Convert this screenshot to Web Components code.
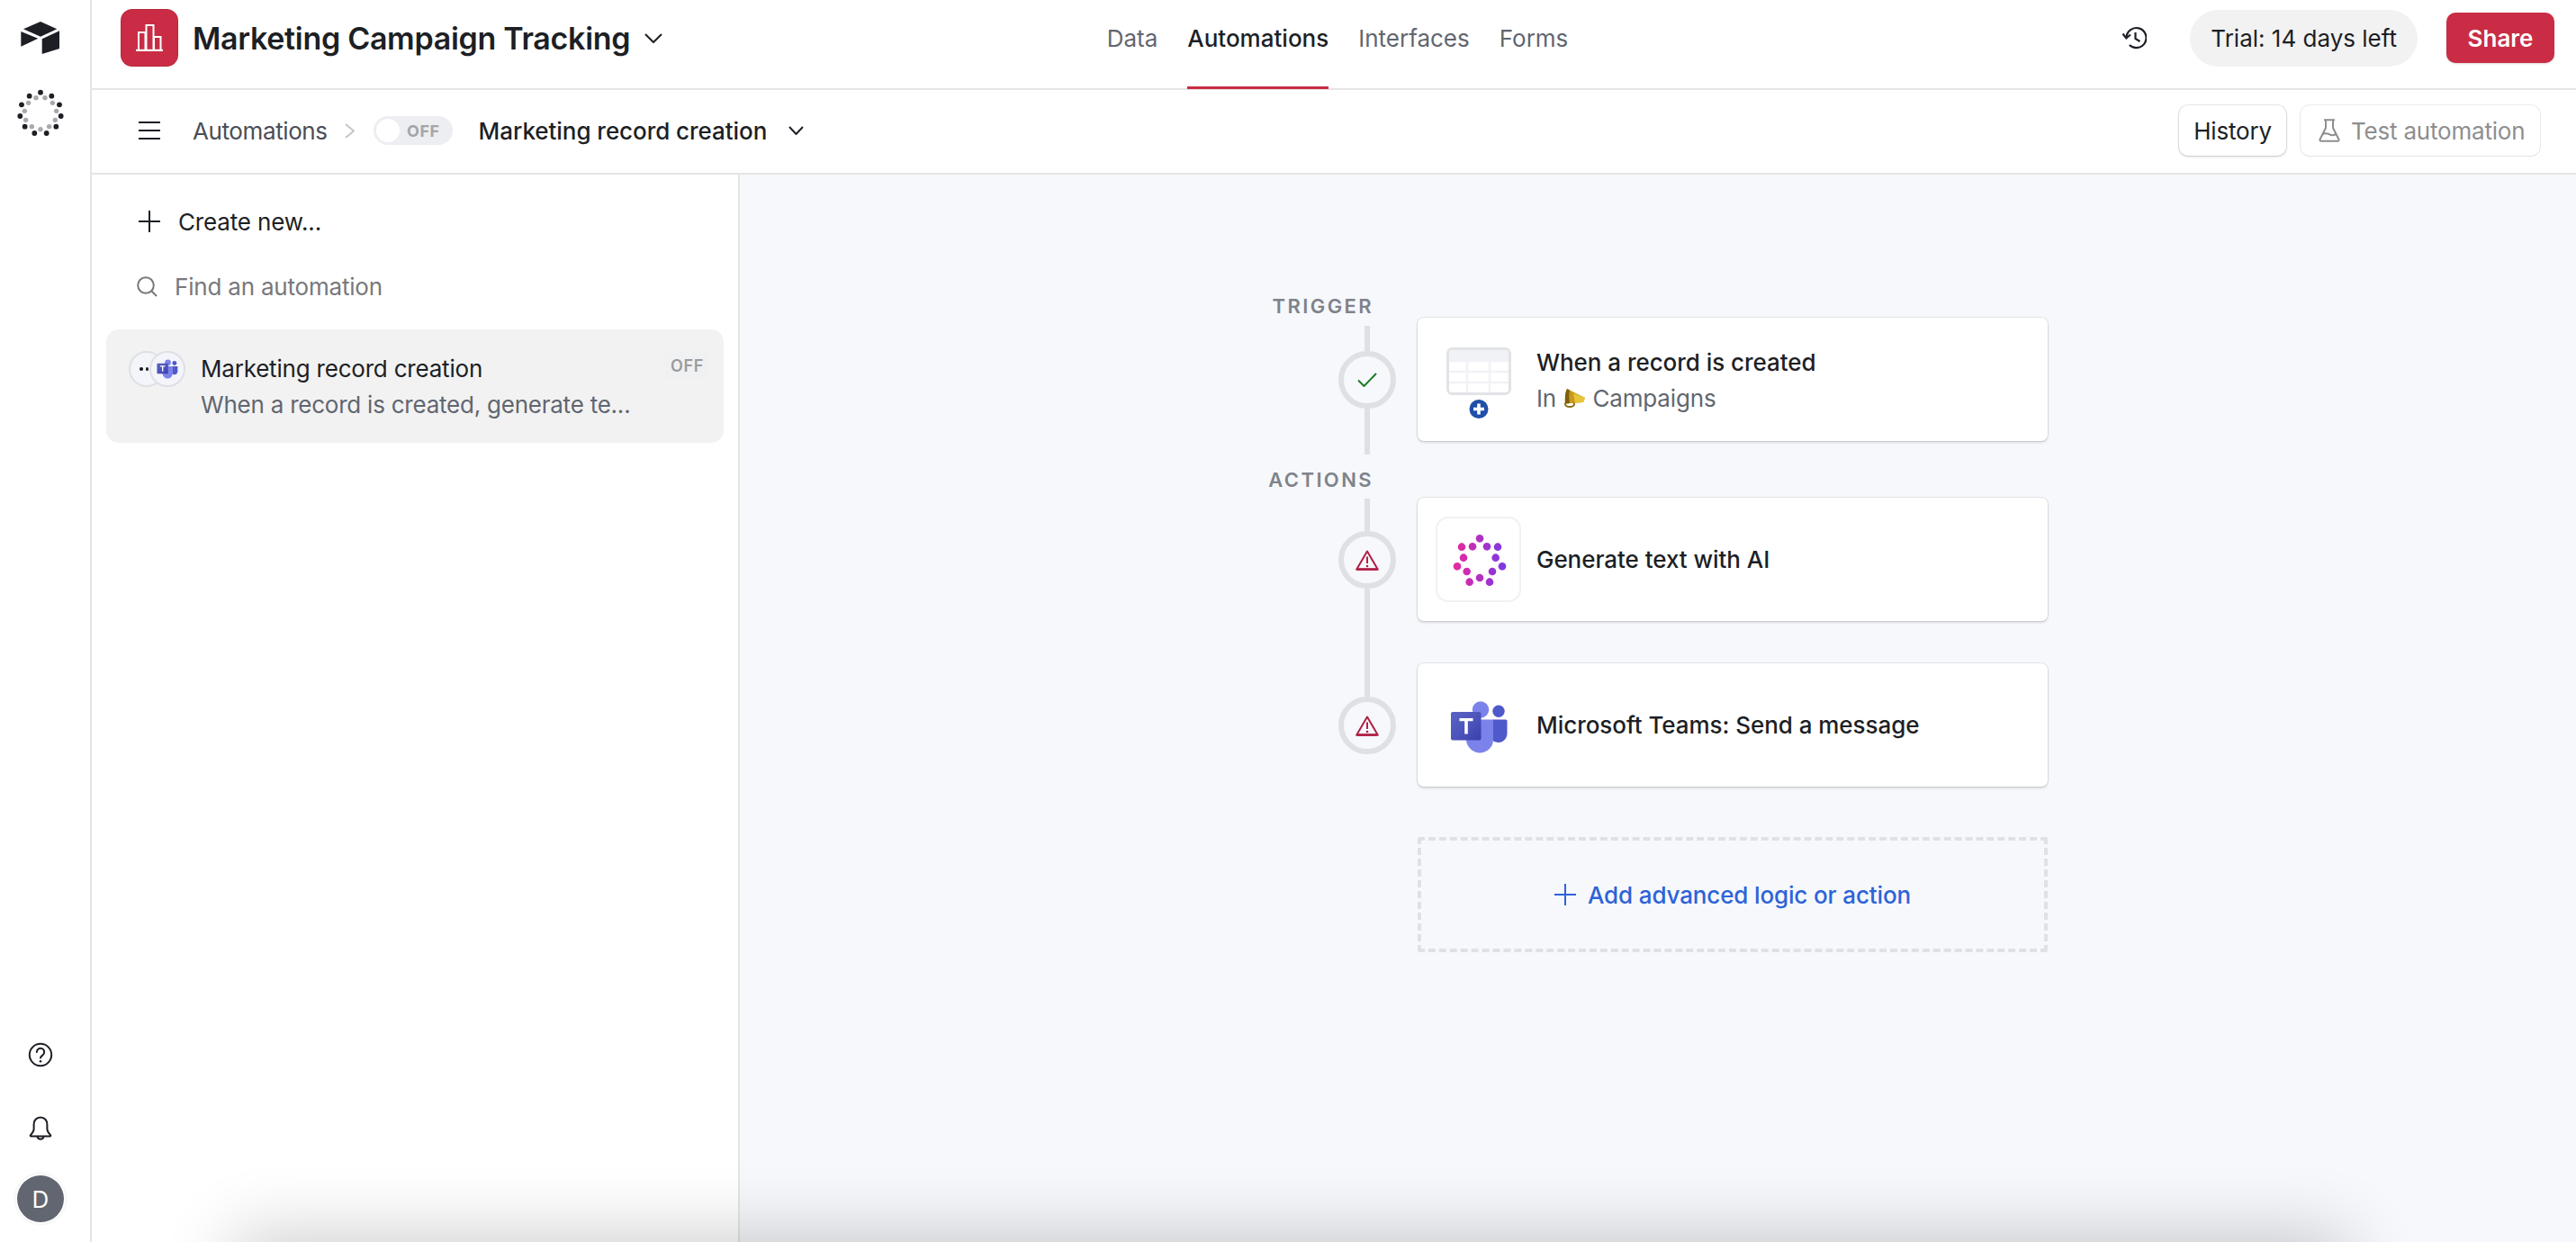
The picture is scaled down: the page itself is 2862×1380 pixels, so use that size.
<!DOCTYPE html>
<html lang="en"><head><meta charset="utf-8"><title>Marketing Campaign Tracking</title>
<style>
html,body{margin:0;padding:0;height:100%;background:#fff;overflow:hidden}
body{font-family:Inter,"Liberation Sans",sans-serif;color:#1d1f25}
</style></head><body>
<app-shell>
  <app-rail slot="rail"></app-rail>
  <app-topbar slot="top"></app-topbar>
  <app-subbar slot="sub"></app-subbar>
  <app-sidebar slot="side">
    <auto-item name="Marketing record creation" desc="When a record is created, generate te..."></auto-item>
  </app-sidebar>
  <flow-canvas slot="canvas">
    <flow-label>TRIGGER</flow-label>
    <flow-step status="ok" pad="9" above="28" below="51" two>
      <table-icon slot="icon"></table-icon>
      <span slot="title">When a record is created</span>
      <span slot="sub">In <mega-phone></mega-phone> Campaigns</span>
    </flow-step>
    <flow-label style="height:48px;align-items:flex-end;padding-bottom:9px">ACTIONS</flow-label>
    <flow-step status="warn" pad="1" above="36" below="83">
      <ai-badge slot="icon" style="margin-left:-2px"></ai-badge>
      <span slot="title">Generate text with AI</span>
    </flow-step>
    <flow-step status="warn" pad="0" above="37" below="0">
      <teams-icon slot="icon" style="width:65px;height:60px;margin-top:4px"></teams-icon>
      <span slot="title">Microsoft Teams: Send a message</span>
    </flow-step>
    <flow-add>Add advanced logic or action</flow-add>
  </flow-canvas>
</app-shell>

<script>
function def(name, css, html, setup){
  customElements.define(name, class extends HTMLElement{
    connectedCallback(){
      if(this.shadowRoot) return;
      const r=this.attachShadow({mode:'open'});
      r.innerHTML='<style>'+css+'</style>'+(typeof html==='function'?html(this):html);
      if(setup) setup(r,this);
    }
  });
}
const F='font-family:Inter,"Liberation Sans",sans-serif;';

def('app-shell',`
:host{display:grid;position:relative;width:2862px;height:1380px;overflow:hidden;background:#fff;
 grid-template-columns:102px 720px 1fr;grid-template-rows:100px 94px 1fr;${F}}
::slotted([slot=rail]){grid-row:1/4;grid-column:1}
::slotted([slot=top]){grid-row:1;grid-column:2/4}
::slotted([slot=sub]){grid-row:2;grid-column:2/4}
::slotted([slot=side]){grid-row:3;grid-column:2}
::slotted([slot=canvas]){grid-row:3;grid-column:3}
.shade{position:absolute;left:268px;right:262px;top:100%;height:120px;box-shadow:0 0 80px 8px rgba(0,0,0,.2);pointer-events:none}
`,`<slot name="rail"></slot><slot name="top"></slot><slot name="sub"></slot><slot name="side"></slot><slot name="canvas"></slot><div class="shade"></div>`);

const outer=[[135,308],[98,320],[172,320],[72,349],[198,349],[67,387],[203,387],[83,422],[187,422],[115,444],[155,444]];
const inner=[[120,326],[150,326],[95,343],[175,343],[82,370],[188,370],[86,400],[184,400],[106,422],[164,422],[135,431]];
const ring=outer.map(p=>`<circle cx="${p[0]/3}" cy="${p[1]/3}" r="2.9" fill="#1d1f25"/>`).join('')+inner.map(p=>`<circle cx="${p[0]/3}" cy="${p[1]/3}" r="2.7" fill="#a8a9ab"/>`).join('');

def('app-rail',`
:host{display:flex;flex-direction:column;align-items:center;box-sizing:border-box;border-right:2px solid #e5e5e5;background:#fff;padding:24px 10px 22px 0}
svg{display:block;flex:none}
.ai{margin-top:37px}
.sp{flex:1}
.help{margin-bottom:54px}
.bell{margin-bottom:38px}
.av{width:52px;height:52px;border-radius:50%;background:#616670;color:#fff;display:flex;align-items:center;justify-content:center;font-size:26px;font-weight:400;box-shadow:0 0 0 2px #fff,0 0 3px 2px rgba(0,0,0,.12)}
`,`
<svg class="logo" width="44" height="37" viewBox="23 24 44 37"><path d="M45 24 63.300 32.300 45 40.700 26 32.300Z" fill="#1d1f25"/><path d="M23.300 35 42.300 42.700 23.300 51.700Z" fill="#1d1f25"/><path d="M46.700 43.300 66 34.300V54L46.700 60Z" fill="#1d1f25"/></svg>
<svg class="ai" width="60" height="60" viewBox="15 98 60 60">${ring}</svg>
<div class="sp"></div>
<svg class="help" width="28" height="28" viewBox="0 0 28 28" fill="none" stroke="#1d1f25" stroke-width="2"><circle cx="14" cy="14" r="12.2"/><path d="M9.8 11a4.2 4.2 0 1 1 6.6 3.4c-1.4 1-2.4 1.6-2.4 3.2" stroke-linecap="round"/><circle cx="14" cy="21.2" r="1.3" fill="#1d1f25" stroke="none"/></svg>
<svg class="bell" width="26" height="28" viewBox="0 0 26 28" fill="none" stroke="#1d1f25" stroke-width="2" stroke-linejoin="round"><path d="M13 1.500c-4.600 0-7.400 3.400-7.400 8v5c0 3-2.200 5-3.800 6.800-.4.600 0 1.200.6 1.200h21.200c.6 0 1-.6.6-1.200-1.600-1.800-3.800-3.800-3.800-6.800v-5c0-4.600-2.800-8-7.400-8Z"/><path d="M9.500 23a3.600 3.600 0 0 0 7 0"/></svg>
<div class="av">D</div>
`);

const chev=(w,h,c='#1d1f25',sw=2)=>`<svg width="${w}" height="${h}" viewBox="0 0 ${w} ${h}" fill="none" stroke="${c}" stroke-width="${sw}" style="display:block;flex:none"><path d="M1 1 ${w/2} ${h-1} ${w-1} 1"/></svg>`;

def('app-topbar',`
:host{display:grid;grid-template-columns:1fr auto 1fr;align-items:stretch;box-sizing:border-box;border-bottom:2px solid #e5e5e5;background:#fff;padding:0 24px 0 32px}
.l,.r{display:flex;align-items:center;padding-bottom:14px}
.r{justify-content:flex-end}
.app{flex:none;width:64px;height:64px;border-radius:13px;background:#c92c44;box-shadow:inset 0 0 0 1px rgba(0,0,0,.08);display:flex;align-items:center;justify-content:center}
h1{margin:0 0 0 16px;font-size:34px;font-weight:600;letter-spacing:-.3px;color:#1d1f25;white-space:nowrap}
.c{margin-left:16px}
nav{display:flex;gap:33px;align-items:stretch;margin-left:0}
nav a{display:flex;align-items:center;font-size:26px;color:#616670;padding-bottom:14px;box-sizing:border-box;position:relative}
nav a.on{color:#1d1f25;font-weight:500}
nav a.on::after{content:"";position:absolute;left:0;right:0;bottom:-1px;height:3px;background:#c92c44}
.trial{height:63px;box-sizing:border-box;background:#f2f2f2;border-radius:32px;display:flex;align-items:center;padding:0 23px;font-size:26px;color:#1d1f25;margin-left:48px}
.share{width:120px;height:56px;box-sizing:border-box;background:#c92c44;border-radius:10px;color:#fff;font-weight:600;font-size:26px;display:flex;align-items:center;justify-content:center;margin-left:32px;box-shadow:0 1px 2px rgba(0,0,0,.15)}
`,`
<div class="l"><div class="app"><svg width="30" height="30" viewBox="0 0 30 30" fill="none" stroke="#fff" stroke-width="2"><path d="M0 29h30" stroke-width="2.400"/><path d="M3 28V9h7.500v19M11.500 28V1h8v27M20 28V14h7.500v14"/></svg></div><h1>Marketing Campaign Tracking</h1><span class="c">${chev(20,11)}</span></div>
<nav><a>Data</a><a class="on">Automations</a><a>Interfaces</a><a>Forms</a></nav>
<div class="r"><svg width="28" height="26" viewBox="0 0 28 26" fill="none" stroke="#1d1f25" stroke-width="2.200"><path d="M5.500 13a11 11 0 1 1 3.400 8" /><path d="M1.500 8.500 5.300 13.500 10 9.500" /><path d="M15.500 7v7l5 3"/></svg><div class="trial">Trial: 14 days left</div><div class="share">Share</div></div>
`);

def('app-subbar',`
:host{display:flex;align-items:center;box-sizing:border-box;border-bottom:2px solid #e5e5e5;background:#fff;padding:0 40px 2px 52px}
.burger{width:24px;height:20px;display:flex;flex-direction:column;justify-content:space-between;margin-right:36px}
.burger i{display:block;height:2px;background:#1d1f25}
.crumb{font-size:26px;color:#4a4e57;letter-spacing:-.4px}
.sep{margin:0 21px 0 19px;display:block}
.tog{width:88px;height:32px;border-radius:16px;background:#edeef1;position:relative;display:flex;align-items:center;justify-content:flex-end;padding-right:14px;box-sizing:border-box;color:#a3a5ab;font-size:18px;font-weight:700;letter-spacing:.5px}
.tog::before{content:"";position:absolute;left:3px;top:3px;width:26px;height:26px;border-radius:50%;background:#fff}
.name{font-size:26px;font-weight:500;margin-left:29px;color:#1d1f25;letter-spacing:-.05px}
.c{margin-left:24px}
.sp{flex:1}
.btn{height:56px;box-sizing:border-box;border-radius:10px;display:flex;align-items:center;font-size:26px;background:#fff;letter-spacing:-.2px}
.hist{width:119px;justify-content:center;box-shadow:0 0 0 1px rgba(0,0,0,.07),0 1px 3px rgba(0,0,0,.18);color:#1d1f25}
.test{width:266px;margin-left:16px;box-shadow:0 0 0 1px rgba(0,0,0,.07),0 1px 2px rgba(0,0,0,.05);color:#8e8e90;padding-left:20px;gap:12px}
`,`
<div class="burger"><i></i><i></i><i></i></div>
<span class="crumb">Automations</span>
<svg class="sep" width="11" height="17" viewBox="0 0 11 17" fill="none" stroke="#c4c5c8" stroke-width="2"><path d="M1 1 10 8.500 1 16"/></svg>
<div class="tog">OFF</div>
<span class="name">Marketing record creation</span>
<span class="c">${chev(17,10)}</span>
<div class="sp"></div>
<div class="btn hist">History</div>
<div class="btn test"><svg width="24" height="26" viewBox="0 0 24 26" fill="none" stroke="#8e8e90" stroke-width="2"><path d="M6 1.200h12M8 1.200V10L1.500 23a1.300 1.300 0 0 0 1.200 1.800h18.600a1.300 1.300 0 0 0 1.200-1.800L16 10V1.200"/><path d="M4.500 17c4-2 6-.5 8 .5s4 1 7-.5"/></svg>Test automation</div>
`);

def('app-sidebar',`
:host{display:block;box-sizing:border-box;border-right:2px solid #e5e5e5;background:#fff;padding:0 16px}
.row{display:flex;align-items:center;color:#1d1f25;font-size:26px;letter-spacing:-.15px}
.create{height:52px;padding-left:36px;gap:20px;margin-top:26px}
.find{height:52px;padding-left:34px;gap:19px;margin-top:20px;color:#77787c;letter-spacing:-.2px}
.list{margin-top:22px}
svg{flex:none;display:block}
`,`
<div class="row create"><svg width="24" height="24" viewBox="0 0 24 24" stroke="#1d1f25" stroke-width="2"><path d="M12 0v24M0 12h24"/></svg>Create new...</div>
<div class="row find"><svg width="23" height="23" viewBox="0 0 23 23" fill="none" stroke="#77787c" stroke-width="2"><circle cx="10" cy="10" r="8.800"/><path d="M16.500 16.500 22 22"/></svg>Find an automation</div>
<div class="list"><slot></slot></div>
`);

def('auto-item',`
:host{display:flex;box-sizing:border-box;width:686px;height:126px;background:#f2f2f2;border-radius:14px;padding:24px 16px 0 25px;position:relative}
.icons{display:flex;flex:none;width:63px;height:40px}
.ic{width:40px;height:40px;box-sizing:border-box;border-radius:50%;border:2px solid #dfe0e4;background:#f4f5fa;display:flex;align-items:center;justify-content:center;flex:none}
.ic+.ic{margin-left:-17px}
.dots{display:flex;gap:3px;margin-right:6px}
.dots i{width:3.500px;height:3.500px;border-radius:50%;background:#1d1f25}
.t{margin-left:17px;min-width:0;flex:1}
.n{font-size:26px;line-height:38px;color:#1d1f25;margin-top:1px;letter-spacing:-.2px}
.d{font-size:26px;line-height:38px;color:#616670;white-space:nowrap;margin-top:2px;letter-spacing:-.23px}
.off{position:absolute;right:16px;top:24px;width:49px;height:32px;display:flex;align-items:center;justify-content:center;background:#f0f1f3;border-radius:4px;color:#9a9ba0;font-size:18px;font-weight:600;letter-spacing:.6px}
`,h=>`
<div class="icons"><div class="ic"><div class="dots"><i></i><i></i></div></div><div class="ic"><teams-icon style="width:24px;height:22px"></teams-icon></div></div>
<div class="t"><div class="n">${h.getAttribute('name')}</div><div class="d">${h.getAttribute('desc')}</div></div>
<div class="off">OFF</div>
`);

def('flow-canvas',`
:host{display:block;background:#f7f8fb;padding:132px 0 0 589px;box-sizing:border-box;overflow:hidden}
.w{width:864px}
`,`<div class="w"><slot></slot></div>`);

def('flow-label',`
:host{display:flex;justify-content:flex-end;align-items:center;width:115px;height:27px;font-size:22px;font-weight:600;letter-spacing:2.400px;color:#7e838c;line-height:1;box-sizing:border-box}
`,`<slot></slot>`);

const tick=`<svg width="22" height="16" viewBox="0 0 22 16" fill="none" stroke="#1c7a26" stroke-width="2"><path d="M1 8.500 7.500 15 21 1"/></svg>`;
const warn=`<svg width="26" height="23" viewBox="0 0 26 23" fill="none" stroke="#b01f45" stroke-width="2" stroke-linejoin="round"><path d="M13 1.500 1.200 21.800h23.600Z"/><path d="M2 21.500h22" stroke-width="2.600"/><path d="M13 7.500v7.500"/><circle cx="13" cy="18" r="1.300" fill="#b01f45" stroke="none"/></svg>`;

def('flow-step',`
:host{display:grid;grid-template-columns:164px 700px;align-items:start}
.spine{display:flex;flex-direction:column;align-items:center;width:64px;margin-left:76px}
.seg{width:6px;background:#dfe0e4;margin-left:-1px;flex:none}
.dot{width:64px;height:64px;border-radius:50%;box-sizing:border-box;border:6px solid #dfe0e4;display:flex;align-items:center;justify-content:center;flex:none;background:#f7f8fb}
.card{height:137px;box-sizing:border-box;background:#fff;border-radius:7px;box-shadow:0 0 0 1px rgba(0,0,0,.08),0 2px 3px rgba(0,0,0,.12);display:grid;grid-template-columns:132px 1fr;align-items:center}
.ico{display:flex;justify-content:center;align-items:center;margin-left:4px}
.ttl{font-size:26px;font-weight:500;color:#1d1f25;line-height:36px;letter-spacing:-.05px}
.sub{font-size:26px;color:#616670;line-height:36px;margin-top:4px;letter-spacing:-.15px}
:host([two]) .txt{padding-top:3px}
`,h=>{const a=h.getAttribute('above'),b=h.getAttribute('below'),p=h.getAttribute('pad');return `
<div class="spine" style="padding-top:${p}px"><div class="seg" style="height:${a}px"></div><div class="dot">${h.getAttribute('status')==='ok'?tick:warn}</div><div class="seg" style="height:${b}px"></div></div>
<div class="card"><div class="ico"><slot name="icon"></slot></div><div class="txt"><div class="ttl"><slot name="title"></slot></div><div class="sub"><slot name="sub"></slot></div></div></div>`},
(r,h)=>{ if(!h.querySelector('[slot=sub]')) r.querySelector('.sub').remove(); });

def('flow-add',`
:host{display:flex;align-items:center;justify-content:center;gap:13px;box-sizing:border-box;width:700px;height:128px;margin:56px 0 0 164px;border:4px dashed #e0e1e5;border-radius:3px;color:#2d63d8;font-size:26px;font-weight:500;letter-spacing:-.14px}
`,`<svg width="24" height="24" viewBox="0 0 24 24" stroke="#2d63d8" stroke-width="2"><path d="M12 0v24M0 12h24"/></svg><span><slot></slot></span>`);

def('table-icon',`
:host{display:block;width:72px;height:79px;margin-top:8px}
svg{display:block}
`,`<svg width="72" height="79" viewBox="0 0 72 79"><rect x="1.500" y="1.500" width="69" height="50" rx="5" fill="#fff" stroke="#e2e3e6" stroke-width="3"/><path d="M3 6.500a3.500 3.500 0 0 1 3.500-3.500h59a3.500 3.500 0 0 1 3.500 3.500V15H3Z" fill="#f1f2f6"/><path d="M3 15h66M3 27h66M3 39h66M23 15v35M48 15v35" stroke="#f1f2f6" stroke-width="2.500" fill="none"/><circle cx="36" cy="68.500" r="10.500" fill="#1f4fa8"/><path d="M36 62.500v12M30 68.500h12" stroke="#fff" stroke-width="3.600"/></svg>`);

const aiPts=[[255,115],[195,143],[231,142],[279,142],[315,143],[201,179],[308,179],[180,208],[330,208],[212,225],[297,225],[255,246],[221,260],[288,260]];
def('ai-badge',`
:host{display:block;width:95px;height:95px;box-sizing:border-box;border:2px solid #f1f1f3;border-radius:14px;background:#fff}
svg{display:block}
`,`<svg width="91" height="91" viewBox="38 16 91 91"><defs><linearGradient id="g" gradientUnits="userSpaceOnUse" x1="58" y1="0" x2="112" y2="0"><stop offset="0" stop-color="#e52aa0"/><stop offset="1" stop-color="#7d39e3"/></linearGradient></defs>${aiPts.map(p=>`<circle cx="${p[0]/3}" cy="${p[1]/3}" r="4.300" fill="url(#g)"/>`).join('')}</svg>`);

def('teams-icon',`
:host{display:block}
svg{display:block;width:100%;height:100%}
`,`<svg viewBox="20 17 65 60"><defs><linearGradient id="t" x1="0" y1="0" x2="1" y2="1"><stop offset="0" stop-color="#5a62c3"/><stop offset=".5" stop-color="#4d55bd"/><stop offset="1" stop-color="#3940ab"/></linearGradient></defs>
<circle cx="74" cy="29.300" r="6.700" fill="#5059c9"/><path d="M67 38.500h15a1.500 1.500 0 0 1 1.500 1.500v13.500c0 6-4.500 10.500-9.500 10.500-3 0-5.500-1-7-2.500Z" fill="#5059c9"/>
<circle cx="54" cy="27.500" r="9.200" fill="#7b83eb"/><path d="M38 38.500h28a2 2 0 0 1 2 2v20.500c0 8-6.800 14.500-14.800 14.500S38.500 69 38 61Z" fill="#7b83eb"/>
<rect x="21" y="30" width="33.500" height="31.500" rx="2" fill="url(#t)"/><path d="M30.500 37h15v3.200h-5.700v14.300h-3.600V40.200h-5.700Z" fill="#fff"/></svg>`);

def('mega-phone',`
:host{display:inline-block;width:26px;height:22px;vertical-align:-1px}
svg{display:block}
`,`<svg width="26" height="22" viewBox="0 0 26 22"><ellipse cx="8" cy="18" rx="5" ry="3" fill="none" stroke="#8a6a10" stroke-width="2"/><path d="M5 1 25 11 23 16 3 17.500C3 12 2.500 6 5 1Z" fill="#c89a1c"/><path d="M5 1C2.500 6 2.500 12 3 17.500L8 17C7 12 7 6 8 2.500Z" fill="#7d5f0c"/><path d="M12 6 25 11 23 16 14 16.500Z" fill="#e8c53a"/></svg>`);
</script>
</body></html>
